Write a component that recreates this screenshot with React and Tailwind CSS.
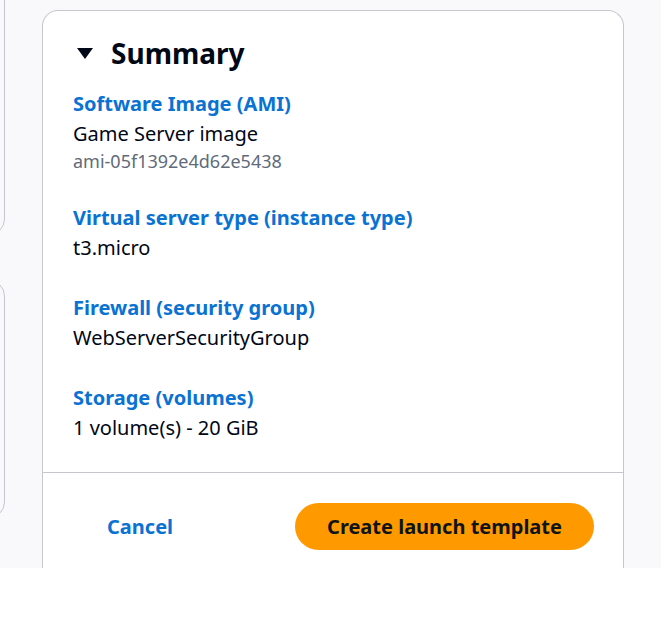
export default function App() {
  const items = [
    { label: 'Software Image (AMI)', value: 'Game Server image', sub: 'ami-05f1392e4d62e5438' },
    { label: 'Virtual server type (instance type)', value: 't3.micro' },
    { label: 'Firewall (security group)', value: 'WebServerSecurityGroup' },
    { label: 'Storage (volumes)', value: '1 volume(s) - 20 GiB' },
  ];

  return (
    <div className="min-h-[625px] bg-white" style={{ fontFamily: '"Noto Sans", "Open Sans", Arial, sans-serif' }}>
      <div className="h-[568px] bg-[#f9f9fb] overflow-hidden flex">
        {/* cards on the left, only their edge shows */}
        <div className="w-[5px] shrink-0 flex flex-col">
          <div className="ml-[-300px] w-[305px] h-[255px] mt-[-20px] shrink-0 bg-[#f9f9fb] border border-[#c6c6cd] rounded-[16px]"></div>
          <div className="ml-[-300px] w-[305px] h-[238px] mt-[45px] shrink-0 bg-[#f9f9fb] border border-[#c6c6cd] rounded-[16px]"></div>
        </div>

        <div className="ml-[37px] mt-[10px] w-[582px] shrink-0 bg-white border border-[#c6c6cd] rounded-t-[16px] border-b-0 h-[600px]">
          <div className="px-[30px] pt-[23px]">
            <h2 className="flex items-center h-[38px] text-[28px] font-bold text-[#000716]">
              <svg width="18" height="13" viewBox="0 0 18 13" className="ml-[3px] mr-[17px]">
                <polygon points="1,1 17,1 9,12" fill="#000716" />
              </svg>
              Summary
            </h2>
            <div className="mt-[17px] flex flex-col gap-[30px] pb-[29px] border-b border-[#c6c6cd] -mx-[30px] px-[30px]">
              {items.map((it) => (
                <div key={it.label}>
                  <div className="text-[20px] leading-[30px] font-bold text-[#0972d3]">{it.label}</div>
                  <div className="text-[20px] leading-[30px] text-[#000716]">{it.value}</div>
                  {it.sub && <div className="text-[18px] leading-[24px] text-[#5f6b7a]">{it.sub}</div>}
                </div>
              ))}
            </div>
          </div>
          <div className="flex items-center justify-between pl-[64px] pr-[29px] pt-[30px]">
            <button className="text-[20px] font-bold text-[#0972d3]">Cancel</button>
            <button className="h-[47px] w-[299px] rounded-full bg-[#ff9900] text-[20px] font-bold text-[#0f141a]">
              Create launch template
            </button>
          </div>
        </div>
      </div>
    </div>
  );
}
